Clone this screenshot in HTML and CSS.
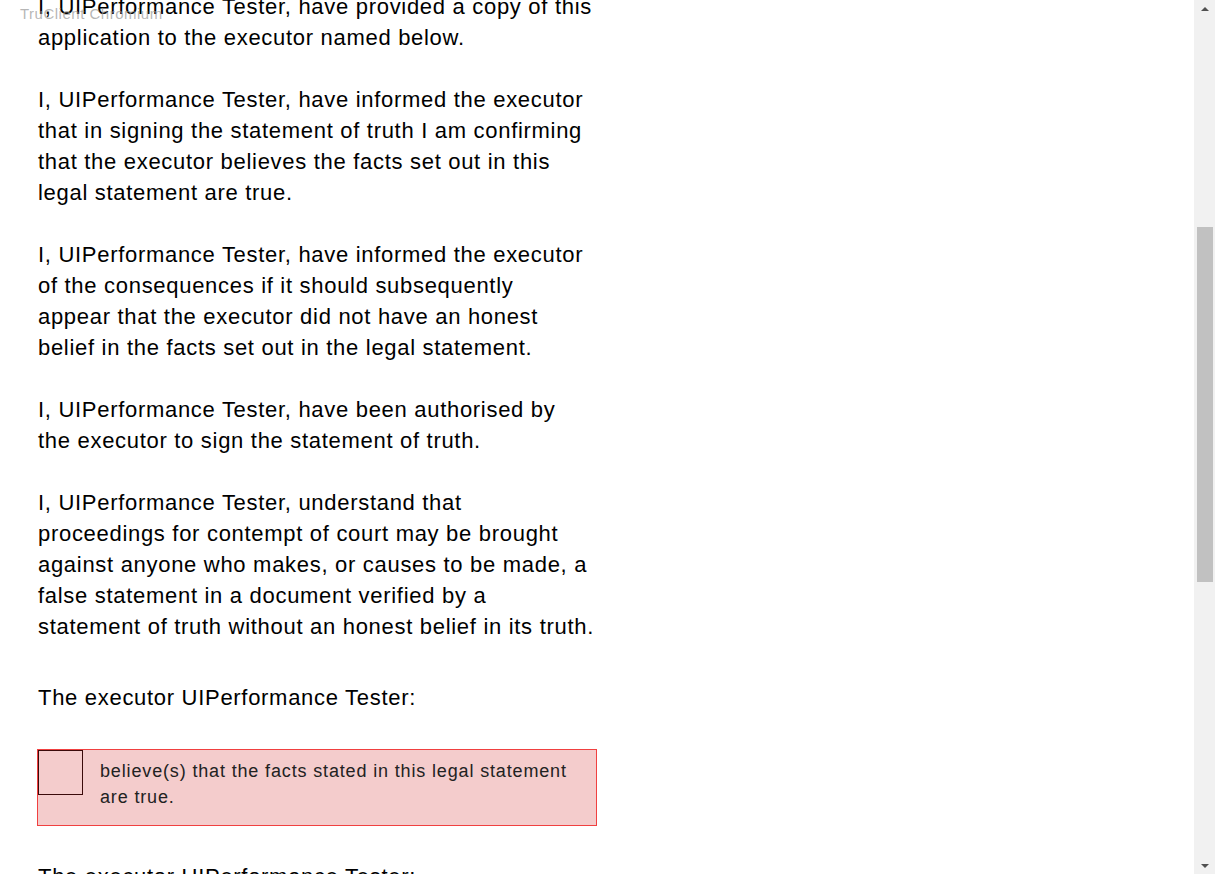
FILE: index.html
```html
<!DOCTYPE html>
<html>
<head>
<meta charset="utf-8">
<link rel="stylesheet" href="styles.css">
</head>
<body>
<div class="window">
  <div class="viewport">
    <div class="content">
      <p class="para">I, UIPerformance Tester, have provided a copy of this application to the executor named below.</p>
      <p class="para">I, UIPerformance Tester, have informed the executor that in signing the statement of truth I am confirming that the executor believes the facts set out in this legal statement are true.</p>
      <p class="para">I, UIPerformance Tester, have informed the executor of the consequences if it should subsequently<br>appear that the executor did not have an honest belief in the facts set out in the legal statement.</p>
      <p class="para">I, UIPerformance Tester, have been authorised by the executor to sign the statement of truth.</p>
      <p class="para">I, UIPerformance Tester, understand that proceedings for contempt of court may be brought against anyone who makes, or causes to be made, a false statement in a document verified by a statement of truth without an honest belief in its truth.</p>
      <div class="group">
        <p class="legend">The executor UIPerformance Tester:</p>
        <label class="check-row">
          <span class="checkbox"></span>
          <span class="check-text">believe(s) that the facts stated in this legal statement are true.</span>
        </label>
      </div>
      <div class="group">
        <p class="legend">The executor UIPerformance Tester:</p>
      </div>
    </div>
    <div class="badge">TruClient Chromium</div>
  </div>
  <div class="scrollbar">
    <div class="arrow arrow-up"></div>
    <div class="track">
      <div class="track-space top-space"></div>
      <div class="thumb"></div>
    </div>
    <div class="arrow arrow-down"></div>
  </div>
</div>
</body>
</html>
```
FILE: styles.css
```css
html, body {
  margin: 0;
  padding: 0;
  height: 100%;
  overflow: hidden;
  background: #fff;
}
.window {
  display: flex;
  height: 874px;
  width: 1215px;
}
.viewport {
  flex: 1;
  position: relative;
  overflow: hidden;
}
.content {
  margin-top: -9px;
  padding-left: 38px;
  width: 556px;
  font-family: "Liberation Sans", Arial, sans-serif;
  font-size: 22px;
  letter-spacing: 0.7px;
  line-height: 31px;
  color: #000;
}
.para {
  margin: 0 0 31px 0;
}
.group {
  padding-top: 9px;
}
.legend {
  margin: 0 0 36px 0;
}
.check-row {
  display: flex;
  margin-left: -1px;
  width: 558px;
  border: 1px solid #f04040;
  background: #f4cccc;
  margin-bottom: 26px;
}
.checkbox {
  flex: none;
  width: 43px;
  height: 43px;
  border: 1px solid #3a0a0a;
}
.check-text {
  padding: 8px 20px 15px 17px;
  font-size: 18px;
  letter-spacing: 0.85px;
  line-height: 26px;
  color: #222;
}
.badge {
  position: absolute;
  left: 20px;
  top: 5px;
  font-family: "Liberation Sans", Arial, sans-serif;
  font-size: 15px;
  letter-spacing: 0.5px;
  color: rgba(150, 150, 150, 0.7);
}
.scrollbar {
  flex: none;
  width: 21px;
  background: #f1f1f1;
  display: flex;
  flex-direction: column;
}
.arrow {
  height: 17px;
  display: flex;
  align-items: center;
  justify-content: center;
}
.arrow::before {
  content: "";
  width: 0;
  height: 0;
  border-left: 4px solid transparent;
  border-right: 4px solid transparent;
}
.arrow-up::before {
  border-bottom: 4px solid #505050;
}
.arrow-down::before {
  border-top: 4px solid #505050;
}
.track {
  flex: 1;
  display: flex;
  flex-direction: column;
  padding: 0 2px 0 3px;
}
.top-space {
  height: 210px;
}
.thumb {
  height: 355px;
  background: #c1c1c1;
}
```
